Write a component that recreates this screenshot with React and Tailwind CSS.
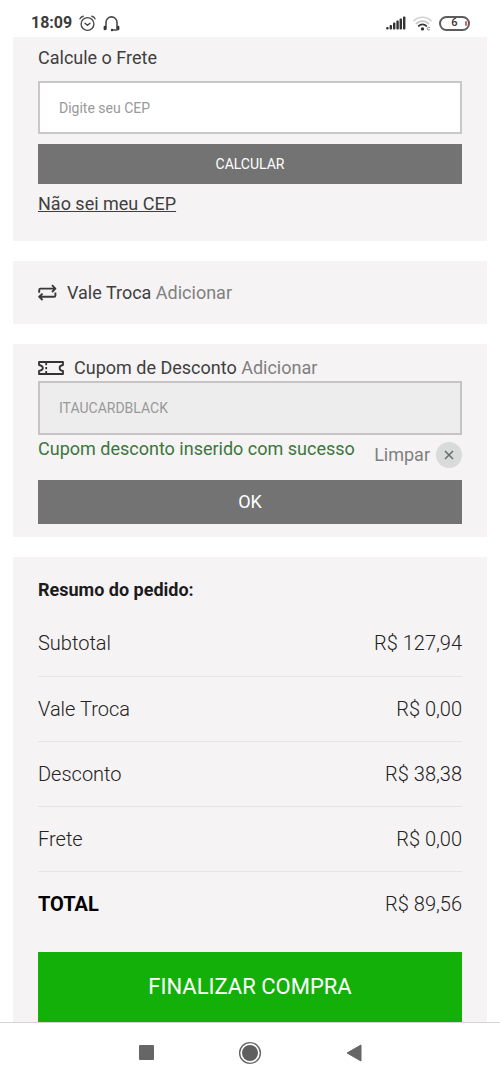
import React from "react";

const SUMMARY = [
  { label: "Subtotal", value: "R$ 127,94" },
  { label: "Vale Troca", value: "R$ 0,00" },
  { label: "Desconto", value: "R$ 38,38" },
  { label: "Frete", value: "R$ 0,00" },
  { label: "TOTAL", value: "R$ 89,56", total: true },
];

function AlarmIcon() {
  return (
    <svg width="17" height="17" viewBox="0 0 17 17" fill="none" stroke="#4a4a4a" strokeWidth="1.4" strokeLinecap="round" aria-hidden="true">
      <circle cx="8.5" cy="9" r="6.4" />
      <path d="M1 3.8Q2 1.8 4.2 1.2M16 3.8Q15 1.8 12.8 1.2M6 8.2l2.5 2.1L11 8.2" />
    </svg>
  );
}

function HeadsetIcon() {
  return (
    <svg width="17" height="17" viewBox="0 0 17 17" fill="none" stroke="#4a4a4a" strokeWidth="1.6" strokeLinecap="round" aria-hidden="true">
      <path d="M3 14V7.4a5.5 5.5 0 0 1 11 0V14" />
      <path d="M1.8 12v2M15.2 12v2" strokeWidth="2.4" stroke="#333" />
      <path d="M14 15H9.4" strokeWidth="1.3" />
      <circle cx="9" cy="15" r="1.2" fill="#333" stroke="none" />
    </svg>
  );
}

function SignalIcon() {
  return (
    <svg width="20" height="14" viewBox="0 0 20 14" fill="#333" aria-hidden="true">
      <rect x="0.2" y="11" width="2.4" height="2.6" rx="0.8" />
      <rect x="3.6" y="9" width="2.4" height="4.6" rx="0.8" />
      <rect x="7" y="6.6" width="2.4" height="7" rx="0.8" />
      <rect x="10.4" y="4.6" width="2.4" height="9" rx="0.8" />
      <rect x="13.6" y="2.6" width="2.4" height="11" rx="0.8" />
      <rect x="17" y="0.4" width="2.4" height="13.2" rx="0.8" />
    </svg>
  );
}

function WifiIcon() {
  return (
    <svg width="19" height="15" viewBox="0 0 19 15" fill="none" strokeLinecap="round" aria-hidden="true">
      <path d="M1 4.6a12.4 12.4 0 0 1 17 0" stroke="#d2d2d2" strokeWidth="1.7" />
      <path d="M3.4 7.6a8.8 8.8 0 0 1 12.2 0" stroke="#c6c6c6" strokeWidth="1.7" />
      <path d="M5.8 9.9a5.4 5.4 0 0 1 7.4 0" stroke="#333" strokeWidth="1.9" />
      <circle cx="9.5" cy="12.9" r="1.7" fill="#333" />
      <path d="M16.4 11.4a1.4 1.4 0 1 0 0 2.4" stroke="#777" strokeWidth="1" />
    </svg>
  );
}

function SwapIcon() {
  return (
    <svg width="19" height="17" viewBox="0 0 19 17" fill="none" stroke="#3a3a3a" strokeWidth="1.9" strokeLinejoin="round" aria-hidden="true">
      <path d="M1.2 8.8V6q0-1.400 1.400-1.400H16.800M14 1.200l3.400 3.400L14 8" />
      <path d="M17.400 8.400v3q0 1.400-1.400 1.400H1.800M4.600 9.600l-3.400 3.200 3.400 3.200" />
    </svg>
  );
}

function TicketIcon() {
  return (
    <svg width="26" height="14" viewBox="0 0 26 14" fill="none" stroke="#333" strokeWidth="1.8" strokeLinejoin="round" aria-hidden="true">
      <path d="M1 1h24v3c-2.4.2-3.4 1.5-3.4 3s1 2.8 3.4 3v3H1v-3c2.2-.4 3.8-1.5 3.8-3S3.2 4.4 1 4z" />
      <path d="M8.2 2v10.4" strokeDasharray="2.2 1.8" />
    </svg>
  );
}

function StatusBar() {
  return (
    <header className="flex h-[37px] items-center justify-between pr-[30px] pl-[31px] pt-[9px]">
      <div className="flex items-center gap-[7px]">
        <span className="text-base leading-5 font-bold text-[#3c3c3c]">18:09</span>
        <AlarmIcon />
        <HeadsetIcon />
      </div>
      <div className="flex items-center gap-[7px]">
        <SignalIcon />
        <WifiIcon />
        <span className="relative flex h-[15px] w-[31px] items-center justify-center rounded-full border-2 border-[#5c5c5c] text-[11px] leading-3 font-medium text-[#333]">
          6
          <span className="absolute right-px h-[5px] w-[2px] rounded-sm bg-[#d8606e]" />
        </span>
      </div>
    </header>
  );
}

export default function App() {
  return (
    <div className="flex min-h-screen flex-col bg-white font-[Roboto,sans-serif] text-lg leading-6 text-[#3f3f3f]">
      <StatusBar />
      <main className="flex flex-1 flex-col gap-5 px-[13px]">
        <section className="bg-[#f5f3f4] px-[25px] pt-[9px] pb-[25px]">
          <label htmlFor="cep" className="mb-[11px] block">Calcule o Frete</label>
          <input
            id="cep"
            type="text"
            placeholder="Digite seu CEP"
            className="block h-[53px] w-full border-2 border-[#c8c8c8] bg-white px-[19px] text-sm placeholder:text-[#999] placeholder:opacity-100"
          />
          <button type="button" className="mt-[10px] block h-10 w-full bg-[#737373] text-sm text-white">CALCULAR</button>
          <a href="#cep" className="mt-2 inline-block align-top underline">Não sei meu CEP</a>
        </section>

        <section className="flex h-[63px] items-center gap-[10px] bg-[#f5f3f4] px-[25px]">
          <SwapIcon />
          <p>
            Vale Troca <a href="#vale" className="text-[#808080]">Adicionar</a>
          </p>
        </section>

        <section className="bg-[#f5f3f4] px-[25px] pt-3 pb-[13px]">
          <div className="mb-px flex items-center gap-[10px]">
            <TicketIcon />
            <label htmlFor="cupom">
              Cupom de Desconto <a href="#cupom" className="text-[#808080]">Adicionar</a>
            </label>
          </div>
          <input
            id="cupom"
            type="text"
            readOnly
            value="ITAUCARDBLACK"
            className="block h-[54px] w-full border-2 border-[#c4c4c4] bg-[#ededed] px-[19px] text-sm text-[#999]"
          />
          <div className="flex justify-between">
            <p className="pt-[2px] text-[#3c763d]">Cupom desconto inserido com sucesso</p>
            <button type="button" className="mt-[7px] flex items-center gap-[6px] text-[#808080]">
              Limpar
              <span className="flex size-[26px] items-center justify-center rounded-full bg-[#d9dada]">
                <svg width="10" height="10" viewBox="0 0 10 10" stroke="#6a6a6a" strokeWidth="1.5" aria-hidden="true">
                  <path d="M1 1l8 8M9 1 1 9" />
                </svg>
              </span>
            </button>
          </div>
          <button type="button" className="mt-3 block h-11 w-full bg-[#737373] text-lg text-white">OK</button>
        </section>

        <section className="flex-1 bg-[#f6f3f4] px-[25px] pt-[21px]">
          <h2 className="font-bold text-[#1c1c1c]">Resumo do pedido:</h2>
          <table className="mt-[9px] w-full border-collapse text-xl font-light text-[#222]">
            <tbody>
              {SUMMARY.map((row) => (
                <tr key={row.label} className="h-[65px] border-b border-[#e6e4e5] last:border-b-0">
                  <th scope="row" className={row.total ? "text-left font-bold text-black" : "text-left font-light"}>{row.label}</th>
                  <td className="text-right">{row.value}</td>
                </tr>
              ))}
            </tbody>
          </table>
          <button type="button" className="mt-4 block h-[70px] w-full bg-[#14b00a] text-[22px] text-white">FINALIZAR COMPRA</button>
        </section>
      </main>
      <nav className="flex h-[60px] items-center justify-center gap-[80px] border-t border-[#d4d4d4]">
        <button type="button" aria-label="Recentes" className="flex w-6 justify-center">
          <span className="size-[15px] rounded-[1px] bg-[#666]" />
        </button>
        <button type="button" aria-label="Início" className="flex w-6 justify-center">
          <svg width="24" height="24" viewBox="0 0 24 24" aria-hidden="true">
            <circle cx="12" cy="12" r="10.4" fill="none" stroke="#666" strokeWidth="1.4" />
            <circle cx="12" cy="12" r="8" fill="#5f5f5f" />
          </svg>
        </button>
        <button type="button" aria-label="Voltar" className="flex w-6 justify-center">
          <svg width="16" height="18" viewBox="0 0 16 18" aria-hidden="true">
            <path d="M15 1v16L1 9z" fill="#666" stroke="#666" strokeLinejoin="round" />
          </svg>
        </button>
      </nav>
    </div>
  );
}
